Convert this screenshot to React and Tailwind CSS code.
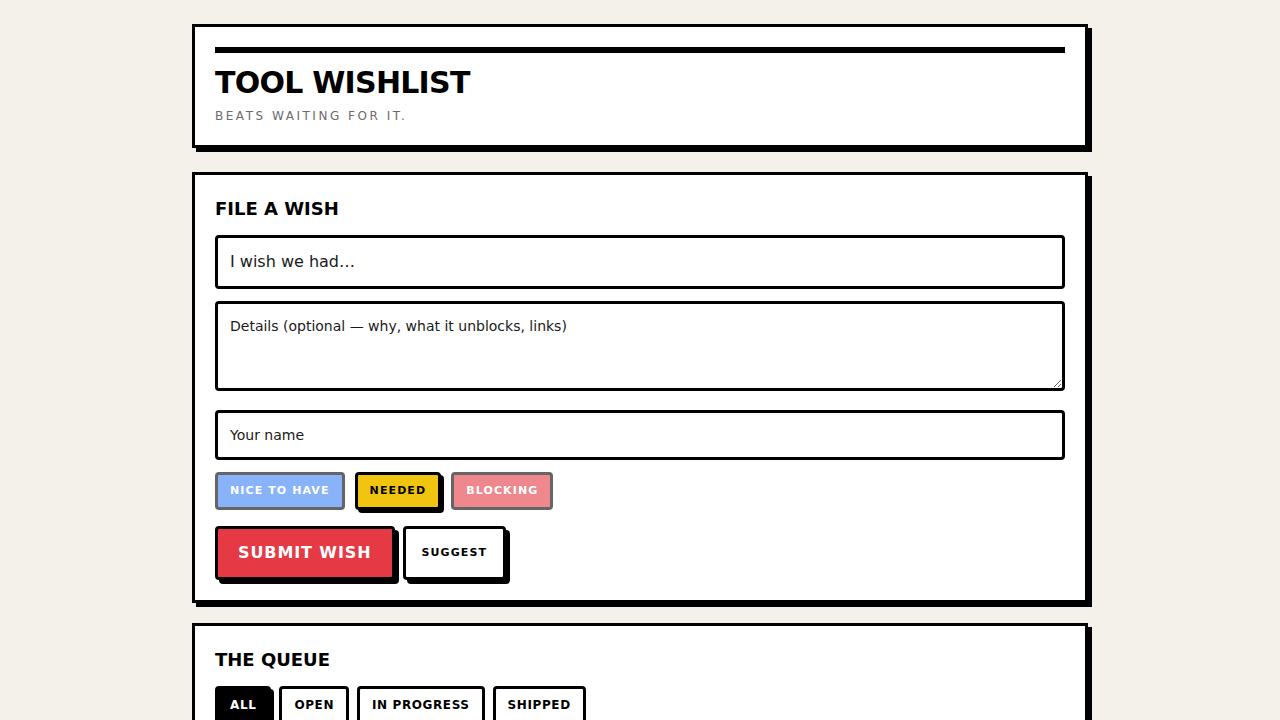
import { useState } from 'react';

const PRIORITIES = [
  { id: 'nice', label: 'Nice to have', color: 'bg-[#3b82f6] text-white' },
  { id: 'needed', label: 'Needed', color: 'bg-[#f1c40f] text-black' },
  { id: 'blocking', label: 'Blocking', color: 'bg-[#e63946] text-white' },
];

const FILTERS = ['All', 'Open', 'In progress', 'Shipped'];

const Panel = ({ children, className = '' }) => (
  <section className={`bg-white border-[3px] border-black shadow-[4px_4px_0_#000] p-5 ${className}`}>
    {children}
  </section>
);

const App = () => {
  const [priority, setPriority] = useState('needed');
  const [filter, setFilter] = useState('All');

  return (
    <div className="min-h-screen bg-[#f4f1ea] pt-6 pb-10 font-['DejaVu_Sans',sans-serif] text-black">
      <div className="max-w-[896px] mx-auto">
        {/* header */}
        <Panel className="mb-6">
          <div className="h-[6px] bg-black" />
          <h1 className="mt-3 text-[30px] leading-[36px] font-bold tracking-[-0.75px]">TOOL WISHLIST</h1>
          <p className="mt-[6px] text-xs leading-[18px] tracking-[0.21em] text-[#6b6b6b]">BEATS WAITING FOR IT.</p>
        </Panel>

        {/* form */}
        <Panel className="mb-5">
          <h2 className="text-lg leading-7 font-bold mb-3">FILE A WISH</h2>
          <input
            type="text"
            placeholder="I wish we had…"
            className="block w-full border-[3px] border-black rounded-[4px] px-3 py-3 text-base leading-6 outline-none placeholder:text-[#1a1a1a]"
          />
          <textarea
            rows={3}
            placeholder="Details (optional — why, what it unblocks, links)"
            className="block w-full mt-3 border-[3px] border-black rounded-[4px] px-3 py-3 text-sm leading-5 outline-none resize-y placeholder:text-[#1a1a1a]"
          />
          <input
            type="text"
            placeholder="Your name"
            className="block w-full mt-[19px] border-[3px] border-black rounded-[4px] px-3 py-3 text-sm leading-5 outline-none placeholder:text-[#1a1a1a]"
          />

          <div className="flex gap-2.5 mt-3">
            {PRIORITIES.map((p) => {
              const active = p.id === priority;
              return (
                <button
                  key={p.id}
                  onClick={() => setPriority(p.id)}
                  className={`${p.color} border-[3px] border-black rounded-[4px] px-3 py-2 text-[11px] leading-4 font-bold uppercase tracking-[0.1em] ${
                    active ? 'shadow-[3px_3px_0_#000]' : 'opacity-60'
                  }`}
                >
                  {p.label}
                </button>
              );
            })}
          </div>

          <div className="flex gap-2 mt-4">
            <button className="bg-[#e63946] text-white border-[3px] border-black rounded-[4px] px-5 py-3 text-base leading-6 font-bold tracking-[0.9px] shadow-[4px_4px_0_#000]">
              SUBMIT WISH
            </button>
            <button className="bg-white text-black border-[3px] border-black rounded-[4px] px-4 text-[11px] leading-4 font-bold tracking-[0.1em] shadow-[4px_4px_0_#000]">
              SUGGEST
            </button>
          </div>
        </Panel>

        {/* queue */}
        <Panel>
          <h2 className="text-lg leading-7 font-bold mb-3">THE QUEUE</h2>
          <div className="flex gap-2">
            {FILTERS.map((f) => {
              const active = f === filter;
              return (
                <button
                  key={f}
                  onClick={() => setFilter(f)}
                  className={`border-[3px] border-black rounded-[4px] px-3 py-2 text-xs leading-4 font-bold uppercase tracking-[0.05em] ${
                    active ? 'bg-black text-white shadow-[3px_3px_0_#000]' : 'bg-white text-black'
                  }`}
                >
                  {f}
                </button>
              );
            })}
          </div>
          <p className="mt-5 text-sm text-[#6b6b6b]">Nothing in the queue yet.</p>
        </Panel>
      </div>
    </div>
  );
};

export default App;
